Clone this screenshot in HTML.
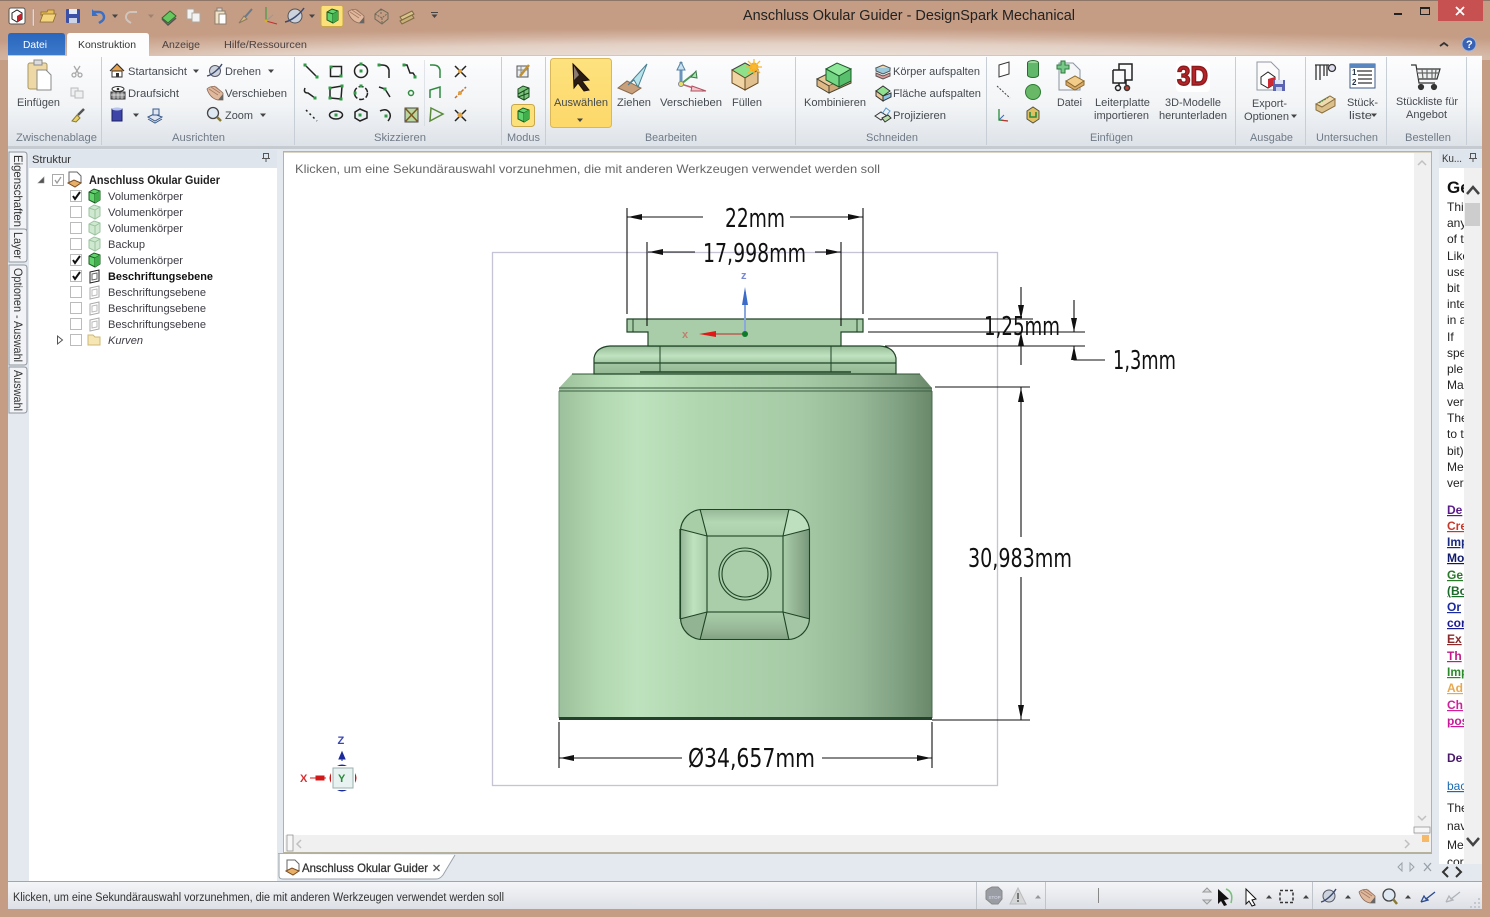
<!DOCTYPE html>
<html lang="de"><head><meta charset="utf-8"><title>Anschluss Okular Guider - DesignSpark Mechanical</title>
<style>
html,body{margin:0;padding:0;width:1490px;height:917px;overflow:hidden;background:#c59c84}
svg{display:block}
text{font-family:"Liberation Sans",Arial,sans-serif}
.r{font-size:11px;fill:#454a50}
.g{font-size:11px;fill:#6f7a86;text-anchor:start}
.t{font-size:11px;fill:#3c3c44}
.p{font-size:12px;fill:#222}
.l{font-size:12px;font-weight:bold;text-decoration:underline}
.d{font-family:"DejaVu Sans",sans-serif;font-size:26px;fill:#111}
</style></head><body>
<svg width="1490" height="917" viewBox="0 0 1490 917" xmlns="http://www.w3.org/2000/svg">
<defs>
<linearGradient id="rib" x1="0" y1="0" x2="0" y2="1"><stop offset="0" stop-color="#fdfdfe"/><stop offset=".55" stop-color="#f2f4f6"/><stop offset="1" stop-color="#dde2e8"/></linearGradient>
<radialGradient id="glow" gradientUnits="userSpaceOnUse" cx="0" cy="0" r="1" gradientTransform="translate(780 62) scale(1000 34)"><stop offset="0" stop-color="#efe8e3"/><stop offset=".55" stop-color="#e8d9cf" stop-opacity=".85"/><stop offset="1" stop-color="#e0c9ba" stop-opacity="0"/></radialGradient>
<linearGradient id="blue" x1="0" y1="0" x2="0" y2="1"><stop offset="0" stop-color="#2a66bb"/><stop offset="1" stop-color="#3b79cc"/></linearGradient>
<linearGradient id="sel" x1="0" y1="0" x2="0" y2="1"><stop offset="0" stop-color="#fde27e"/><stop offset="1" stop-color="#fdd86a"/></linearGradient>
<linearGradient id="st" x1="0" y1="0" x2="0" y2="1"><stop offset="0" stop-color="#f5f6f8"/><stop offset="1" stop-color="#dde0e6"/></linearGradient>
<linearGradient id="body" gradientUnits="userSpaceOnUse" x1="559" y1="0" x2="932" y2="0"><stop offset="0" stop-color="#9cc09b"/><stop offset=".11" stop-color="#b2d8b1"/><stop offset=".21" stop-color="#bde2bd"/><stop offset=".38" stop-color="#b0d6b0"/><stop offset=".65" stop-color="#a5caa5"/><stop offset=".81" stop-color="#95b795"/><stop offset=".92" stop-color="#7f9f81"/><stop offset="1" stop-color="#698869"/></linearGradient>
<linearGradient id="mid" x1="0" y1="0" x2="0" y2="1"><stop offset="0" stop-color="#98bb98"/><stop offset=".35" stop-color="#c0e2c0"/><stop offset=".6" stop-color="#a4c8a4"/><stop offset="1" stop-color="#93b693"/></linearGradient>
<linearGradient id="bL" x1="0" y1="0" x2="1" y2="0"><stop offset="0" stop-color="#92b392"/><stop offset=".5" stop-color="#bfe3bf"/><stop offset="1" stop-color="#a8cda8"/></linearGradient>
<linearGradient id="bR" x1="0" y1="0" x2="1" y2="0"><stop offset="0" stop-color="#a9cea9"/><stop offset=".5" stop-color="#92b292"/><stop offset="1" stop-color="#76967a"/></linearGradient>
<linearGradient id="bT" x1="0" y1="0" x2="0" y2="1"><stop offset="0" stop-color="#96b796"/><stop offset=".5" stop-color="#b4d8b4"/><stop offset="1" stop-color="#a9cea9"/></linearGradient>
<linearGradient id="bB" x1="0" y1="0" x2="0" y2="1"><stop offset="0" stop-color="#a9cea9"/><stop offset=".6" stop-color="#98b898"/><stop offset="1" stop-color="#7f9f81"/></linearGradient>
<clipPath id="rp"><rect x="1440" y="172" width="24" height="692"/></clipPath>

<g id="cubeG"><path d="M-5-4 0-7 6-5V4L1 7-5 4Z" fill="#62d26c" stroke="#155c1e"/><path d="M-5-4 1-2 6-5M1-2V7" fill="none" stroke="#155c1e"/><path d="M1-2 6-5V4L1 7Z" fill="#3fae4b"/></g>
<g id="cubeL"><path d="M-5-4 0-7 6-5V4L1 7-5 4Z" fill="#cfe9d0" stroke="#9cc3a0"/><path d="M-5-4 1-2 6-5M1-2V7" fill="none" stroke="#9cc3a0"/></g>
<g id="planeD"><path d="M-4-4 5-6V5L-4 7Z" fill="#fff" stroke="#222"/><path d="M-2-2 3-3V3L-2 4Z" fill="none" stroke="#666"/></g>
<g id="planeL"><path d="M-4-4 5-6V5L-4 7Z" fill="#fff" stroke="#aaa"/><path d="M-2-2 3-3V3L-2 4Z" fill="none" stroke="#bbb"/></g>
<g id="docI"><path d="M-6-8H2L6-4V3H-6Z" fill="#fff" stroke="#666"/><path d="M-7 3-1 0 6 3 0 7Z" fill="#e8b066" stroke="#7a4a20"/></g>
<g id="hand"><path d="M-8-4C-5-7-1-7 1-6L8 0V7H3C-2 6-6 2-8-4Z" fill="#e0b89c" stroke="#8b6a5a" stroke-width=".8"/><path d="M-6-4 3 2M-4-6 5 0M-1-7 7-1" stroke="#a67c66" stroke-width=".8"/><path d="M3 7H8V1Z" fill="#666"/></g>
<g id="tri"><path d="M-3-1.500H3L0 2Z" fill="#444"/></g>
<g id="triU"><path d="M-3 1.500H3L0-2Z" fill="#444"/></g>
<g id="dot"><rect x="-1.500" y="-1.500" width="3" height="3" fill="#2f9a45"/></g>
</defs>

<!-- window chrome -->
<rect width="1490" height="917" fill="#c59c84"/>
<rect width="1490" height="1" fill="#8d7668"/>
<rect y="0" width="1490" height="60" fill="url(#glow)"/>
<rect x="1438" y="0" width="45" height="21" fill="#c75050"/>
<path d="M1456 7l8 8m0-8-8 8" stroke="#fff" stroke-width="1.800"/>
<rect x="1394" y="13" width="8" height="2" fill="#222"/>
<rect x="1420.500" y="7.500" width="9" height="7" fill="none" stroke="#222"/><rect x="1420" y="7" width="10" height="2" fill="#222"/>
<text x="743" y="20" font-size="14.500" fill="#222" textLength="332" lengthAdjust="spacingAndGlyphs">Anschluss Okular Guider - DesignSpark Mechanical</text>

<!-- QAT -->
<g transform="translate(17 16)"><rect x="-8" y="-8" width="16" height="16" rx="2" fill="#fff" stroke="#555"/><path d="M-5-3 0-6 5-3V3L0 6-5 3Z" fill="#fff" stroke="#222"/><path d="M0 0 5-3V3L0 6Z" fill="#c8202a"/></g>
<rect x="32.500" y="9" width="1.500" height="17" fill="#f4ece6" stroke="#a89080" stroke-width=".4"/>
<g transform="translate(48 16)"><path d="M-7-4H-1L0-6H6V-1H-7Z" fill="#e9bf5a" stroke="#8a6a24" stroke-width=".8"/><path d="M-8 6-5-2H8L5 6Z" fill="#f4d57e" stroke="#8a6a24" stroke-width=".8"/></g>
<g transform="translate(73 16)"><rect x="-7" y="-7" width="14" height="14" rx="1" fill="#3d50a8"/><rect x="-4" y="-7" width="8" height="5" fill="#e6eaf4"/><rect x="-4" y="2" width="8" height="5" fill="#cdd4e8"/></g>
<path d="M93 12h6a5 5 0 0 1 3 9l-3 2" fill="none" stroke="#3a6fc4" stroke-width="2.500"/><path d="M92 9v7h6z" fill="#3a6fc4"/>
<use href="#tri" x="115" y="16"/>
<path d="M137 12h-6a5 5 0 0 0-3 9l3 2" fill="none" stroke="#cfc5bd" stroke-width="2"/><use href="#tri" x="151" y="16" opacity=".3"/>
<g transform="translate(169 17)"><path d="M-7 1 1-6 7-1-1 6Z" fill="#67c85f" stroke="#2a6a2a"/><path d="M-7 2-1 8 7 1" fill="none" stroke="#555" stroke-width="1.500"/></g>
<g transform="translate(194 15)" fill="#f2f2f2" stroke="#b0a8a0"><path d="M-7-6H0V4H-7Z"/><path d="M-2-2H6V7H-2Z"/></g>
<g transform="translate(220 16)"><rect x="-5" y="-5" width="10" height="13" fill="#f0e3c8" stroke="#8b8070"/><rect x="-1" y="-2" width="7" height="10" fill="#fff" stroke="#8b8070"/><rect x="-3" y="-8" width="5" height="3" fill="#ddd" stroke="#8b8070"/></g>
<g transform="translate(245 16)"><path d="M-6 7-1 0 2 3Z" fill="#d9b878" stroke="#8a7a60"/><path d="M0 1 7-7" stroke="#6a7a8a" stroke-width="2"/></g>
<g transform="translate(270 16)" fill="none"><path d="M-4-9V5" stroke="#2a9a3a"/><path d="M-4 5 7 8" stroke="#c03030"/><path d="M-4 5 3-1" stroke="#999"/><circle cx="-4" cy="5" r="1.500" fill="#d9b020"/></g>
<g transform="translate(295 16)"><circle r="7" fill="#cdd3dc" stroke="#555"/><path d="M-10 6C-4 5 5-2 9-8" stroke="#3a4a70" stroke-width="1.500" fill="none"/></g>
<use href="#tri" x="312" y="16"/>
<rect x="321" y="5.500" width="22" height="21" rx="2" fill="#fce07a" stroke="#c8a848"/>
<use href="#cubeG" x="332" y="16"/>
<use href="#hand" x="356" y="16"/>
<g transform="translate(381 16)" fill="none" stroke="#6d6a58"><path d="M-6-2 0-7 7-3V3L1 8-6 3Z"/><path d="M-6-2 1 2 7-3M1 2V8M0-7V-1" stroke-dasharray="2 1"/></g>
<g transform="translate(407 16)"><path d="M-7 1 5-5 7-2-5 4Z" fill="#d9c28c" stroke="#7d6a40"/><path d="M-7 5 5-1 7 2-5 8Z" fill="#c8b078" stroke="#7d6a40"/></g>
<rect x="431" y="12" width="7" height="1" fill="#444"/><use href="#tri" x="434.500" y="16"/>

<!-- tabs -->
<path d="M8 55V36q0-3 3-3H62q3 0 3 3V55Z" fill="url(#blue)"/>
<text x="23" y="48" font-size="10.500" fill="#fff" textLength="24" lengthAdjust="spacingAndGlyphs">Datei</text>
<path d="M67 56V36q0-3 3-3H146q3 0 3 3V56Z" fill="#fdfdfe"/>
<text x="78" y="48" font-size="10.500" fill="#333" textLength="58" lengthAdjust="spacingAndGlyphs">Konstruktion</text>
<text x="162" y="48" font-size="10.500" fill="#4a4040" textLength="38" lengthAdjust="spacingAndGlyphs">Anzeige</text>
<text x="224" y="48" font-size="10.500" fill="#4a4040" textLength="83" lengthAdjust="spacingAndGlyphs">Hilfe/Ressourcen</text>
<path d="M1440 46l4-3 4 3" fill="none" stroke="#333" stroke-width="1.800"/>
<circle cx="1469" cy="44" r="7" fill="#3a62b4" stroke="#9fb4dc"/><text x="1466" y="48" font-size="11" font-weight="bold" fill="#fff">?</text>

<!-- ribbon -->
<rect x="8" y="55" width="1474" height="92" fill="url(#rib)"/>
<rect x="8" y="55" width="59" height="1" fill="#cfc8c2"/><rect x="149" y="55" width="1333" height="1" fill="#cfc8c2"/>
<rect x="8" y="146" width="1474" height="3" fill="#c6cbd2"/>
<g fill="#c8ced6"><rect x="101" y="57" width="1" height="88"/><rect x="294" y="57" width="1" height="88"/><rect x="501" y="57" width="1" height="88"/><rect x="545" y="57" width="1" height="88"/><rect x="795" y="57" width="1" height="88"/><rect x="986" y="57" width="1" height="88"/><rect x="1235" y="57" width="1" height="88"/><rect x="1305" y="57" width="1" height="88"/><rect x="1386" y="57" width="1" height="88"/><rect x="1466" y="57" width="1" height="88"/><rect x="424" y="60" width="1" height="66" opacity=".5"/></g>

<!-- Zwischenablage -->
<g transform="translate(39 76)"><rect x="-11" y="-13" width="19" height="26" rx="2" fill="#eed9a6" stroke="#a99660"/><rect x="-5" y="-16" width="8" height="5" fill="#ddd" stroke="#8a8a8a"/><path d="M-2-6H7L12-1V14H-2Z" fill="#fff" stroke="#8a8a8a"/></g>
<text x="17" y="106" class="r" textLength="43" lengthAdjust="spacingAndGlyphs">Einfügen</text>
<g transform="translate(77 71)" fill="none" stroke="#a8a8a8" stroke-width="1.300"><path d="M-3-5 2 3M3-5-2 3"/><circle cx="-3" cy="4" r="2"/><circle cx="3" cy="4" r="2"/></g>
<g transform="translate(77 93)" fill="#eef0f2" stroke="#bbb"><path d="M-6-5H1V3H-6Z"/><path d="M-2-2H6V5H-2Z"/></g>
<g transform="translate(78 115)"><path d="M-6 6-1 0 2 3-2 7Z" fill="#e9d36a" stroke="#8a7a30"/><path d="M0 0 6-6" stroke="#555" stroke-width="2.500"/></g>

<!-- Ausrichten -->
<g transform="translate(117 71)"><path d="M-7 0 0-7 7 0" fill="#e9a24a" stroke="#333" stroke-width="1.200"/><rect x="-5" y="0" width="10" height="6" fill="#fff" stroke="#333"/><rect x="-1" y="2" width="3" height="4" fill="#333"/></g>
<text x="128" y="75" class="r" textLength="59" lengthAdjust="spacingAndGlyphs">Startansicht</text><use href="#tri" x="196" y="71"/>
<g transform="translate(215 71)"><circle r="5.500" fill="#cdd3dc" stroke="#556"/><path d="M-8 5C-3 4 4-2 7-7" stroke="#3a4a70" stroke-width="1.400" fill="none"/></g>
<text x="225" y="75" class="r" textLength="36" lengthAdjust="spacingAndGlyphs">Drehen</text><use href="#tri" x="271" y="71"/>
<g transform="translate(118 93)"><rect x="-7" y="-1" width="14" height="7" fill="#888" stroke="#333"/><path d="M-4-1V6M0-1V6M4-1V6M-7 2H7" stroke="#eee" stroke-width=".7"/><ellipse cy="-4" rx="6" ry="2.500" fill="#fff" stroke="#333"/><circle cy="-4" r="1.300" fill="#333"/></g>
<text x="128" y="97" class="r" textLength="51" lengthAdjust="spacingAndGlyphs">Draufsicht</text>
<use href="#hand" x="215" y="93"/>
<text x="225" y="97" class="r" textLength="62" lengthAdjust="spacingAndGlyphs">Verschieben</text>
<g transform="translate(117 115)"><path d="M-5-6H5V6H-5Z" fill="#3d46a8" stroke="#1a1f60"/><ellipse cy="-6" rx="5" ry="1.500" fill="#b8c4ec"/></g><use href="#tri" x="136" y="115"/>
<g transform="translate(155 115)" fill="#dfe6f2" stroke="#3a5a8a"><path d="M-7 2-1-1 7 2 0 6Z"/><path d="M-7 4 0 8 7 4" fill="none"/><path d="M-2-6H4V0H-2Z"/></g>
<g transform="translate(214 114)"><circle cx="-1" cy="-1" r="5.500" fill="#dfe9f4" stroke="#444" stroke-width="1.300"/><path d="M3 3 7 7" stroke="#8a7a30" stroke-width="2.500"/></g>
<text x="225" y="119" class="r" textLength="28" lengthAdjust="spacingAndGlyphs">Zoom</text><use href="#tri" x="263" y="115"/>

<!-- Skizzieren -->
<g fill="none" stroke="#222" stroke-width="1.500">
<path d="M305 65 317 77"/><rect x="330.500" y="66.500" width="11" height="10"/><circle cx="361" cy="71" r="6.500"/><path d="M379 65h3q6 0 7 5v8"/><path d="M404 65h3l3 8h3l2 3"/><path d="M430 65h3q6 0 7 5v8" stroke="#2f8a3f"/><path d="M455 66 466 77M466 66 455 77"/>
<path d="M305 88q-2 5 3 5l7 5"/><path d="M330 88 342 86 341 99 330 98Z"/><circle cx="361" cy="93" r="6.500" stroke-dasharray="5 2"/><path d="M379 87l6 2 5 8"/><path d="M430 98v-8l10-3v11" stroke="#2f8a3f"/><path d="M455 98 466 87" stroke="#c07030" stroke-dasharray="3 1.500"/>
<path d="M306 110 317 121" stroke-dasharray="2 3"/><ellipse cx="336" cy="115" rx="6.500" ry="4"/><path d="M355 112 360 109 367 112 367 118 360 121 355 118Z"/><path d="M380 111q6-3 9 1t-1 9"/><path d="M430 121 443 114 431 108Z" stroke="#5a8a3a"/><path d="M455 110 466 121M466 110 455 121"/>
</g>
<rect x="405" y="108" width="13" height="14" fill="#b9d6a0" stroke="#444"/><path d="M405 122 418 108M405 108l13 14" stroke="#7a5a20" stroke-width="1.500"/>
<circle cx="411" cy="93" r="2.500" fill="none" stroke="#2f8a3f" stroke-width="1.500"/>
<use href="#dot" x="305" y="65"/><use href="#dot" x="317" y="77"/><use href="#dot" x="331" y="67"/><use href="#dot" x="341" y="76"/><use href="#dot" x="361" y="64"/><use href="#dot" x="361" y="71"/><use href="#dot" x="379" y="65"/><use href="#dot" x="404" y="65"/><use href="#dot" x="415" y="77"/><use href="#dot" x="315" y="98"/><use href="#dot" x="330" y="88"/><use href="#dot" x="342" y="86"/><use href="#dot" x="341" y="99"/><use href="#dot" x="330" y="98"/><use href="#dot" x="361" y="86"/><use href="#dot" x="355" y="93"/><use href="#dot" x="385" y="89"/><use href="#dot" x="336" y="115"/><use href="#dot" x="360" y="115"/><use href="#dot" x="386" y="116"/>
<circle cx="460" cy="71" r="2" fill="#e0a040"/><circle cx="460" cy="93" r="2" fill="#e0a040"/><circle cx="460" cy="115" r="2.500" fill="#e0a040"/>

<!-- Modus -->
<g transform="translate(523 71)"><rect x="-6" y="-5" width="11" height="11" fill="#e8eef2" stroke="#555"/><path d="M-6-1H5M-2-5V6" stroke="#888"/><path d="M-3 5 6-6" stroke="#c09030" stroke-width="2.500"/></g>
<g transform="translate(523 93)"><path d="M-5-4 0-7 6-5V4L1 7-5 4Z" fill="#7cc47c" stroke="#1a4a1f"/><path d="M-5 1 6-5M-5 4 6 0M1-2V7" stroke="#1a4a1f" fill="none"/></g>
<rect x="511.500" y="104.500" width="23" height="22" rx="3" fill="#fce07a" stroke="#c8a848"/><use href="#cubeG" x="523" y="115"/>
<text x="507" y="141" class="g" textLength="33" lengthAdjust="spacingAndGlyphs">Modus</text>

<!-- Bearbeiten -->
<rect x="550.500" y="58.500" width="61" height="69" rx="3" fill="url(#sel)" stroke="#d8b85a"/>
<path d="M573 64 589 80 582 81 589 90 584 91 578 83 574 88Z" fill="#2a1c12" stroke="#1a100a"/><path d="M574 66 574 80 579 75Z" fill="#8a7a70"/>
<text x="554" y="106" class="r" fill="#4c3c1c" textLength="54" lengthAdjust="spacingAndGlyphs">Auswählen</text><use href="#tri" x="580" y="120"/>
<g transform="translate(633 79)"><path d="M-15 9-6 2 8 9-1 15Z" fill="#c9a07c" stroke="#8a6a4c"/><path d="M-5 6 14-15 5 8 1 1Z" fill="#b7e4ec" stroke="#4a7f90"/></g>
<text x="617" y="106" class="r" textLength="34" lengthAdjust="spacingAndGlyphs">Ziehen</text>
<g transform="translate(688 80)" fill="none"><path d="M-7 4V-18" stroke="#6a94bc" stroke-width="3"/><path d="M-11-10-7-18-3-10Z" fill="#c8e4f4" stroke="#5a80a0"/><path d="M-7 4 7-7" stroke="#4a9a5a" stroke-width="2"/><path d="M3-3 8-9 9-2Z" fill="#a8e4b0" stroke="#3a7a4a"/><path d="M-7 4 15 11" stroke="#c06070" stroke-width="1.500"/><path d="M4 6 18 11 3 11Z" fill="#f4c4c8" stroke="#b05060"/><circle cx="-7" cy="4" r="2.500" fill="#e8e060" stroke="#888"/></g>
<text x="660" y="106" class="r" textLength="62" lengthAdjust="spacingAndGlyphs">Verschieben</text>
<g transform="translate(746 76)"><path d="M-14-6-1-13 12-6-1 2Z" fill="#8fe08a" stroke="#444"/><path d="M-14-6V7L-1 14V2Z" fill="#f0d4a4" stroke="#6a4a24"/><path d="M12-6V7L-1 14V2Z" fill="#dfc08e" stroke="#6a4a24"/><circle cx="8" cy="-9" r="4.500" fill="#f8a820"/><path d="M8-17V-1M0-9H16M2-15 14-3M14-15 2-3" stroke="#f8b830" stroke-width="1.300"/></g>
<text x="732" y="106" class="r" textLength="30" lengthAdjust="spacingAndGlyphs">Füllen</text>

<!-- Schneiden -->
<g transform="translate(835 78)"><path d="M-18 1-6-5 8 1-6 8Z" fill="#e9c89a" stroke="#443"/><path d="M-18 1V8L-6 15V8Z" fill="#e0b884" stroke="#443"/><path d="M-6 8V15L16 5V-2" fill="#cfa878" stroke="#443"/><path d="M-9-9 2-15 16-9 4-2Z" fill="#8fe89a" stroke="#1d5a28"/><path d="M-9-9V2L4 9V-2Z" fill="#72d684" stroke="#1d5a28"/><path d="M4-2V9L16 3V-9Z" fill="#58bf6c" stroke="#1d5a28"/></g>
<text x="804" y="106" class="r" textLength="62" lengthAdjust="spacingAndGlyphs">Kombinieren</text>
<g transform="translate(883 71)"><path d="M-7-3 0-6 7-3 0 0Z" fill="#f0d4a4" stroke="#555"/><path d="M-7-3V0L0 3 7 0V-3" fill="#9cc8dc" stroke="#555"/><path d="M-7 2V5L0 8 7 5V2 L0 5Z" fill="#e09898" stroke="#555"/></g>
<text x="893" y="75" class="r" textLength="87" lengthAdjust="spacingAndGlyphs">Körper aufspalten</text>
<g transform="translate(883 93)"><path d="M-7-2 0-7 7-2 0 3Z" fill="#90e090" stroke="#333"/><path d="M-7-2V3L0 8V3Z" fill="#e9c89a" stroke="#333"/><path d="M0 3V8L8 4V0Z" fill="#8ac4e0" stroke="#333"/></g>
<text x="893" y="97" class="r" textLength="88" lengthAdjust="spacingAndGlyphs">Fläche aufspalten</text>
<g transform="translate(883 115)" fill="none" stroke="#333"><path d="M-8 1-2-3 4 1-2 5Z" fill="#f0f0f0"/><path d="M-1-1 3-7 7-4 3 1" stroke="#5a9ad0"/><path d="M-1 3 5 0 8 3 2 7Z" fill="#b8e0a8"/></g>
<text x="893" y="119" class="r" textLength="53" lengthAdjust="spacingAndGlyphs">Projizieren</text>

<!-- Einfügen -->
<path d="M999 65 1009 62V74L999 77Z" fill="#fff" stroke="#333"/>
<path d="M997 86 1010 98" stroke="#444" stroke-dasharray="2 1.500"/>
<path d="M999 109V120L1008 121" fill="none" stroke="#2a8a3a" stroke-width="1.300"/><path d="M999 120 1004 115" stroke="#3a6ab0"/><path d="M1001 120 1008 121" stroke="#c03030"/>
<g transform="translate(1033 69)"><ellipse cy="-6" rx="5.500" ry="2.500" fill="#9ad89a" stroke="#2a6a30"/><path d="M-5.500-6V6A5.500 2.500 0 0 0 5.500 6V-6" fill="#62b86a" stroke="#2a6a30"/></g>
<circle cx="1033" cy="92" r="7.500" fill="#68b868" stroke="#2a7a30"/>
<path d="M1027 111 1033 107 1039 111V119L1033 123 1027 119Z" fill="#e0c060" stroke="#554"/><path d="M1030 112V117H1036V112" fill="none" stroke="#2a8a3a" stroke-width="1.600"/>
<g transform="translate(1069 76)"><path d="M-10-13H4L11-6V14H-10Z" fill="#f4f6f8" stroke="#8a94a0"/><path d="M-12-11H-8V-15H-4V-11H0V-7H-4V-3H-8V-7H-12Z" fill="#78c88a" stroke="#2a7a3a"/><path d="M-3 5 6 0 15 5 6 11Z" fill="#f2cc88" stroke="#8a6a30"/><path d="M-3 5V9L6 14 15 9V5L6 11Z" fill="#dcaa68" stroke="#8a6a30"/></g>
<text x="1057" y="106" class="r" textLength="25" lengthAdjust="spacingAndGlyphs">Datei</text>
<g transform="translate(1122 76)" fill="none" stroke="#222" stroke-width="1.500"><path d="M-9-6H-3V-12H10V4H4V9M-9-6V7H3V-6H-9M-3 7V10"/><circle cx="-4" cy="12" r="2.500"/><circle cx="5" cy="12" r="2.500" fill="#c84030" stroke="#333"/></g>
<text x="1095" y="106" class="r" textLength="55" lengthAdjust="spacingAndGlyphs">Leiterplatte</text>
<text x="1094" y="119" class="r" textLength="55" lengthAdjust="spacingAndGlyphs">importieren</text>
<rect x="1176" y="61" width="34" height="31" rx="4" fill="#fff"/>
<text x="1177" y="85" font-size="27" font-weight="bold" fill="#b52428" stroke="#8a1a1c" stroke-width="1.400" textLength="31" lengthAdjust="spacingAndGlyphs">3D</text>
<text x="1165" y="106" class="r" textLength="56" lengthAdjust="spacingAndGlyphs">3D-Modelle</text>
<text x="1159" y="119" class="r" textLength="68" lengthAdjust="spacingAndGlyphs">herunterladen</text>

<!-- Ausgabe -->
<g transform="translate(1270 78)"><path d="M-13-16H1L9-8V12H-13Z" fill="#fbfbfc" stroke="#9098a4"/><path d="M-9-1-2-6 5-1V6L-2 10-9 6Z" fill="#fff" stroke="#222"/><path d="M-2 1 5-1V6L-2 10Z" fill="#d02830"/><rect x="3" y="2" width="12" height="11" fill="#5a64b0"/><rect x="5" y="2" width="8" height="4" fill="#e0e6f4"/><rect x="6" y="9" width="6" height="4" fill="#c8d0e8"/></g>
<text x="1252" y="107" class="r" textLength="35" lengthAdjust="spacingAndGlyphs">Export-</text>
<text x="1244" y="120" class="r" textLength="45" lengthAdjust="spacingAndGlyphs">Optionen</text><use href="#tri" x="1294" y="116"/>

<!-- Untersuchen -->
<g transform="translate(1325 73)" fill="none" stroke="#333" stroke-width="1.300"><path d="M-10-8H4M-9-8V7M-5-8V7M-1-8V3M2-8V3"/><circle cx="7" cy="-5" r="3.500" fill="#dde"/></g>
<g transform="translate(1325 104)"><path d="M-9 0 5-8 10-5-3 3Z" fill="#f0dab0" stroke="#8a7040"/><path d="M-9 0V6L-3 9 10 2V-5L-3 3Z" fill="#dcc08c" stroke="#8a7040"/><path d="M-6-1 4-7" stroke="#3a8a3a" stroke-dasharray="2 1"/></g>
<g transform="translate(1362 76)"><rect x="-12" y="-12" width="25" height="24" fill="#fff" stroke="#3a5a88"/><rect x="-12" y="-12" width="25" height="4" fill="#5a86c0"/><text x="-10" y="-1" font-size="8" font-weight="bold" fill="#234">1</text><text x="-10" y="9" font-size="8" font-weight="bold" fill="#234">2</text><path d="M-5-5H10M-4-1H10M-4 3H10M-4 7H10" stroke="#333" stroke-width="1.300"/></g>
<text x="1347" y="106" class="r" textLength="31" lengthAdjust="spacingAndGlyphs">Stück-</text>
<text x="1349" y="119" class="r" textLength="23" lengthAdjust="spacingAndGlyphs">liste</text><use href="#tri" x="1374" y="115"/>

<!-- Bestellen -->
<g transform="translate(1426 76)" fill="none" stroke="#333" stroke-width="1.200"><path d="M-15-11H-10L-7 7H9"/><path d="M-9-7H14L11 3H-7" fill="#eef0f2"/><path d="M-4-7-3 3M1-7V3M6-7V3M10-7 9 3M-8-3H13" stroke="#666"/><circle cx="-5" cy="11" r="2.500" fill="#333"/><circle cx="8" cy="11" r="2.500" fill="#333"/></g>
<text x="1396" y="105" class="r" textLength="62" lengthAdjust="spacingAndGlyphs">Stückliste für</text>
<text x="1406" y="118" class="r" textLength="41" lengthAdjust="spacingAndGlyphs">Angebot</text>

<!-- group labels -->
<text x="16" y="141" class="g" textLength="81" lengthAdjust="spacingAndGlyphs">Zwischenablage</text>
<text x="172" y="141" class="g" textLength="53" lengthAdjust="spacingAndGlyphs">Ausrichten</text>
<text x="374" y="141" class="g" textLength="52" lengthAdjust="spacingAndGlyphs">Skizzieren</text>
<text x="645" y="141" class="g" textLength="52" lengthAdjust="spacingAndGlyphs">Bearbeiten</text>
<text x="866" y="141" class="g" textLength="52" lengthAdjust="spacingAndGlyphs">Schneiden</text>
<text x="1090" y="141" class="g" textLength="43" lengthAdjust="spacingAndGlyphs">Einfügen</text>
<text x="1250" y="141" class="g" textLength="43" lengthAdjust="spacingAndGlyphs">Ausgabe</text>
<text x="1316" y="141" class="g" textLength="62" lengthAdjust="spacingAndGlyphs">Untersuchen</text>
<text x="1405" y="141" class="g" textLength="46" lengthAdjust="spacingAndGlyphs">Bestellen</text>

<!-- main background -->
<rect x="8" y="149" width="1474" height="732" fill="#e4e9ef"/>

<!-- left tabs -->
<g fill="#f1f3f6" stroke="#8e969e">
<path d="M9 152H24Q27 152 27 155V229Q27 232 24 232H9Z"/>
<path d="M9 229H24Q27 229 27 232V259Q27 262 24 262H9Z"/>
<path d="M9 265H24Q27 265 27 268V362Q27 365 24 365H9Z"/>
<path d="M9 367H24Q27 367 27 370V410Q27 413 24 413H9Z"/>
</g>
<g font-size="12" fill="#333">
<text transform="translate(14 155) rotate(90)" textLength="72" lengthAdjust="spacingAndGlyphs">Eigenschaften</text>
<text transform="translate(14 232) rotate(90)" textLength="27" lengthAdjust="spacingAndGlyphs">Layer</text>
<text transform="translate(14 268) rotate(90)" textLength="94" lengthAdjust="spacingAndGlyphs">Optionen - Auswahl</text>
<text transform="translate(14 370) rotate(90)" textLength="41" lengthAdjust="spacingAndGlyphs">Auswahl</text>
</g>

<!-- structure panel -->
<rect x="29" y="150" width="248" height="18" fill="#dfe5ec"/>
<rect x="29" y="168" width="248" height="713" fill="#fff"/>
<text x="32" y="163" font-size="11" fill="#333" textLength="39" lengthAdjust="spacingAndGlyphs">Struktur</text>
<g transform="translate(266 158)" fill="none" stroke="#555"><rect x="-2.500" y="-4.500" width="5" height="5"/><path d="M-4 .500H4M0 .500V4"/></g>
<path d="M38 183 44 177V183Z" fill="#555" stroke="#888" stroke-width=".6"/>
<rect x="52.500" y="174.500" width="11" height="11" fill="#fff" stroke="#aaa"/><path d="M55 180 57 183 61 177" fill="none" stroke="#999" stroke-width="1.300"/>
<use href="#docI" x="75" y="180"/>
<text x="89" y="184" font-size="11.500" font-weight="bold" fill="#222" textLength="131" lengthAdjust="spacingAndGlyphs">Anschluss Okular Guider</text>
<g fill="#fff" stroke="#bbb"><rect x="70.500" y="190.500" width="11" height="11"/><rect x="70.500" y="206.500" width="11" height="11"/><rect x="70.500" y="222.500" width="11" height="11"/><rect x="70.500" y="238.500" width="11" height="11"/><rect x="70.500" y="254.500" width="11" height="11"/><rect x="70.500" y="270.500" width="11" height="11"/><rect x="70.500" y="286.500" width="11" height="11"/><rect x="70.500" y="302.500" width="11" height="11"/><rect x="70.500" y="318.500" width="11" height="11"/><rect x="70.500" y="334.500" width="11" height="11"/></g>
<g fill="none" stroke="#111" stroke-width="2"><path d="M73 196 75 199 80 192"/><path d="M73 260 75 263 80 256"/><path d="M73 276 75 279 80 272"/></g>
<use href="#cubeG" x="94" y="196"/><use href="#cubeL" x="94" y="212"/><use href="#cubeL" x="94" y="228"/><use href="#cubeL" x="94" y="244"/><use href="#cubeG" x="94" y="260"/>
<use href="#planeD" x="94" y="276"/><use href="#planeL" x="94" y="292"/><use href="#planeL" x="94" y="308"/><use href="#planeL" x="94" y="324"/>
<path d="M57.500 336V344L62.500 340Z" fill="#fff" stroke="#555"/>
<path d="M88 335H93L95 337H100V345H88Z" fill="#f6e6b4" stroke="#cdb878"/>
<text x="108" y="200" class="t" textLength="75" lengthAdjust="spacingAndGlyphs">Volumenkörper</text>
<text x="108" y="216" class="t" textLength="75" lengthAdjust="spacingAndGlyphs">Volumenkörper</text>
<text x="108" y="232" class="t" textLength="75" lengthAdjust="spacingAndGlyphs">Volumenkörper</text>
<text x="108" y="248" class="t" textLength="37" lengthAdjust="spacingAndGlyphs">Backup</text>
<text x="108" y="264" class="t" textLength="75" lengthAdjust="spacingAndGlyphs">Volumenkörper</text>
<text x="108" y="280" font-size="11" font-weight="bold" fill="#111" textLength="105" lengthAdjust="spacingAndGlyphs">Beschriftungsebene</text>
<text x="108" y="296" class="t" textLength="98" lengthAdjust="spacingAndGlyphs">Beschriftungsebene</text>
<text x="108" y="312" class="t" textLength="98" lengthAdjust="spacingAndGlyphs">Beschriftungsebene</text>
<text x="108" y="328" class="t" textLength="98" lengthAdjust="spacingAndGlyphs">Beschriftungsebene</text>
<text x="108" y="344" class="t" font-style="italic" textLength="35" lengthAdjust="spacingAndGlyphs">Kurven</text>

<!-- viewport -->
<rect x="283.500" y="151.500" width="1148" height="701" fill="#fff" stroke="#b6b29e"/>
<rect x="284" y="152" width="1147" height="1" fill="#d9d6c6"/>
<rect x="1414" y="153" width="17" height="682" fill="#f0f0f0"/>
<rect x="285" y="835" width="1146" height="17" fill="#f0f0f0"/>
<path d="M1418 165l4-4 4 4" fill="none" stroke="#c0c0c0" stroke-width="1.500"/>
<path d="M1418 816l4 4 4-4" fill="none" stroke="#c0c0c0" stroke-width="1.500"/>
<path d="M301 840l-4 4 4 4M1405 840l4 4-4 4" fill="none" stroke="#c0c0c0" stroke-width="1.500"/>
<rect x="1414" y="827" width="16" height="6" fill="#f7f7f7" stroke="#888" stroke-width=".7"/>
<rect x="287" y="835" width="6" height="16" fill="#f7f7f7" stroke="#888" stroke-width=".7"/>
<rect x="1422" y="835" width="7" height="7" fill="#f5b968"/>
<text x="295" y="173" font-size="12" fill="#666" textLength="585" lengthAdjust="spacingAndGlyphs">Klicken, um eine Sekundärauswahl vorzunehmen, die mit anderen Werkzeugen verwendet werden soll</text>

<!-- annotation plane -->
<rect x="492.500" y="252.500" width="505" height="533" fill="none" stroke="#c4c4d4" stroke-width="1.300"/>

<!-- model -->
<rect x="559" y="388" width="373" height="331" fill="url(#body)"/>
<path d="M572 374H920L932 388V391H559V388Z" fill="url(#body)"/>
<path d="M559 388H932M559 391H932" stroke="#3d5f42" stroke-width="1"/>
<path d="M572 374H920" fill="none" stroke="#2f5535"/>
<path d="M932 391V718" stroke="#48684c"/>
<path d="M559 391V718" stroke="#6f9474"/>
<rect x="559" y="717" width="373" height="3" fill="#23422a"/>
<path d="M594 374V358Q596 347 610 346H880Q894 347 896 358V374Z" fill="url(#mid)" stroke="#1f4526" stroke-width="1.200"/>
<path d="M594 363H896" stroke="#1f4526" stroke-width="1.300"/>
<path d="M660 346V372M831 346V372" stroke="#1f4526"/>
<path d="M640 372H851" stroke="#1f4526" stroke-width="1.500"/>
<path d="M627 319H863V332H841V346H648V332H627Z" fill="#a8cda8" stroke="#1f4526" stroke-width="1.200"/>
<path d="M633 319V332M857 319V332" stroke="#1f4526"/>

<!-- boss -->
<rect x="680" y="509" width="130" height="131" rx="22" fill="#a6cca6"/>
<path d="M701 509H789L783 536H707Z" fill="url(#bT)"/>
<path d="M701 640H789L783 612H707Z" fill="url(#bB)"/>
<path d="M680 529 707 536V612L680 619Z" fill="url(#bL)"/>
<path d="M810 529 783 536V612L810 619Z" fill="url(#bR)"/>
<path d="M680 529 A22 22 0 0 1 701 509L707 536Z" fill="#a8cea8"/>
<path d="M810 529 A22 22 0 0 0 789 509L783 536Z" fill="#bfe0bf"/>
<path d="M680 619 A22 22 0 0 0 701 640L707 612Z" fill="#92b492"/>
<path d="M810 619 A22 22 0 0 1 789 640L783 612Z" fill="#a4c6a4"/>
<rect x="707" y="536" width="76" height="76" fill="#a9cea9"/>
<g fill="none" stroke="#1f4526" stroke-width="1.100"><rect x="680.500" y="509.500" width="129" height="130" rx="22"/><rect x="707" y="536" width="76" height="76"/><path d="M700 509 707 536M680 529 707 536M789 509 783 536M810 529 783 536M680 619 707 612M700 640 707 612M789 640 783 612M810 619 783 612"/><circle cx="745" cy="574" r="26"/><circle cx="745" cy="574" r="23"/><path d="M680 529V619" stroke-width="1.200"/></g>

<!-- dims -->
<g stroke="#111" stroke-width="1.100" fill="none">
<path d="M627 208V314M863 208V314M647 242V326M841 242V326"/>
<path d="M627 217H703M790 217H863M648 252H695M815 252H841"/>
<path d="M868 319H1033M868 332H1085M885 346H1085"/>
<path d="M1021 287V319M1021 332V365M1074 300V332M1074 346V360H1105"/>
<path d="M935 387H1030M932 720H1030M1021 387V537M1021 577V720"/>
<path d="M559 722V768M932 722V768M559 758H682M822 758H932"/>
</g>
<g fill="#111">
<path d="M628 217 642 214V220ZM862 217 848 214V220ZM649 252 663 249V255ZM840 252 826 249V255Z"/>
<path d="M1021 319 1018 305H1024ZM1021 332 1018 346H1024ZM1074 332 1071 318H1077ZM1074 346 1071 360H1077Z"/>
<path d="M1021 388 1018 402H1024ZM1021 719 1018 705H1024ZM560 758 574 755V761ZM931 758 917 755V761Z"/>
</g>
<text class="d" x="725" y="227" textLength="60" lengthAdjust="spacingAndGlyphs">22mm</text>
<text class="d" x="703" y="262" textLength="103" lengthAdjust="spacingAndGlyphs">17,998mm</text>
<text class="d" x="984" y="335" textLength="76" lengthAdjust="spacingAndGlyphs">1,25mm</text>
<text class="d" x="1113" y="369" textLength="63" lengthAdjust="spacingAndGlyphs">1,3mm</text>
<text class="d" x="968" y="567" textLength="104" lengthAdjust="spacingAndGlyphs">30,983mm</text>
<text class="d" x="688" y="767" textLength="127" lengthAdjust="spacingAndGlyphs">Ø34,657mm</text>

<!-- triad -->
<path d="M745 334V292" stroke="#8aa8dc" stroke-width="2"/><path d="M745 287 742 305H748Z" fill="#3a6cc8"/>
<text x="741" y="279" font-size="11" font-weight="bold" fill="#7a88d4">z</text>
<path d="M745 334H712" stroke="#b87a68" stroke-width="2"/><path d="M699 334 716 331V337Z" fill="#e01818"/>
<text x="682" y="338" font-size="11" font-weight="bold" fill="#c08070">x</text>
<circle cx="745" cy="334" r="3" fill="#0f7a2a"/>

<!-- view cube -->
<rect x="333" y="768" width="20" height="20" fill="#e8f2f0" stroke="#9ab0b0"/>
<text x="338" y="782" font-size="11" font-weight="bold" fill="#2a8a3a">Y</text>
<path d="M342 753V761M339 759 342 752 345 759Z" fill="#1a2a9a" stroke="#1a2a9a"/>
<text x="337.500" y="744" font-size="11" font-weight="bold" fill="#3a44b4">Z</text>
<path d="M337 766Q342 763 347 766ZM337 790Q342 793 347 790Z" fill="#1a2a9a"/>
<path d="M331 773Q328 778 331 783ZM355 773Q358 778 355 783Z" fill="#c81818"/>
<path d="M310 778H326M316 776H324V780H316Z" stroke="#d01818" fill="#d01818"/>
<text x="300" y="782" font-size="11" font-weight="bold" fill="#d83030">X</text>

<!-- doc tab -->
<rect x="278" y="853" width="1154" height="1" fill="#aab0b6"/>
<path d="M279 854V876Q279 879 283 879H436Q440 879 443 875L455 855" fill="#fff" stroke="#9aa2aa"/>
<use href="#docI" x="293" y="868"/>
<text x="302" y="872" font-size="12" fill="#333" stroke="#333" stroke-width=".3" textLength="126" lengthAdjust="spacingAndGlyphs">Anschluss Okular Guider</text>
<path d="M433.500 865l6 6m0-6-6 6" stroke="#555" stroke-width="1.300"/>
<path d="M1402 863l-4 4 4 4ZM1410 863l4 4-4 4Z" fill="none" stroke="#9aa2aa"/>
<path d="M1424 863l7 8m0-8-7 8" stroke="#98a0a8" stroke-width="1.300"/>

<!-- right panel -->
<rect x="1439" y="150" width="43" height="18" fill="#dfe5ec"/>
<rect x="1439" y="168" width="43" height="696" fill="#fff"/>
<rect x="1464" y="168" width="18" height="696" fill="#f0f0f0"/>
<rect x="1465" y="203" width="15" height="23" fill="#cdcdcd"/>
<text x="1442" y="162" font-size="11" fill="#333" textLength="20" lengthAdjust="spacingAndGlyphs">Ku...</text>
<g transform="translate(1473 158)" fill="none" stroke="#555"><rect x="-2.500" y="-4.500" width="5" height="5"/><path d="M-4 .500H4M0 .500V4"/></g>
<g clip-path="url(#rp)">
<text x="1447" y="193" font-size="17" font-weight="bold" fill="#111">Ge</text>
<text class="p" x="1447" y="211">This</text><text class="p" x="1447" y="227">any</text><text class="p" x="1447" y="243">of th</text><text class="p" x="1447" y="260">Like</text><text class="p" x="1447" y="276">use</text><text class="p" x="1447" y="292">bit</text><text class="p" x="1447" y="308">inte</text><text class="p" x="1447" y="324">in a</text><text class="p" x="1447" y="341">If</text><text class="p" x="1447" y="357">spe</text><text class="p" x="1447" y="373">ple</text><text class="p" x="1447" y="389">Ma</text><text class="p" x="1447" y="406">ver</text><text class="p" x="1447" y="422">The</text><text class="p" x="1447" y="438">to t</text><text class="p" x="1447" y="455">bit)</text><text class="p" x="1447" y="471">Me</text><text class="p" x="1447" y="487">ver</text>
<text class="l" x="1447" y="514" fill="#5a1a8a">De</text>
<text class="l" x="1447" y="530" fill="#c8382a">Cre</text>
<text class="l" x="1447" y="546" fill="#1a2a80">Imp</text>
<text class="l" x="1447" y="562" fill="#101a6a">Mo</text>
<text class="l" x="1447" y="579" fill="#2a7a2a">Ge</text>
<text class="l" x="1447" y="595" fill="#1a6a2a">(Bo</text>
<text class="l" x="1447" y="611" fill="#1a2aa0">Or</text>
<text class="l" x="1447" y="627" fill="#1a1a90">cor</text>
<text class="l" x="1447" y="643" fill="#8a2a2a">Ex</text>
<text class="l" x="1447" y="660" fill="#c01a8a">Th</text>
<text class="l" x="1447" y="676" fill="#2a8a2a">Imp</text>
<text class="l" x="1447" y="692" fill="#e8a850">Ad</text>
<text class="l" x="1447" y="709" fill="#d0209a">Ch</text>
<text class="l" x="1447" y="725" fill="#c8189a">pos</text>
<text x="1447" y="762" font-size="12" font-weight="bold" fill="#4a1a6a">De</text>
<text x="1447" y="790" font-size="12" fill="#1a6ab0" text-decoration="underline">bac</text>
<text class="p" x="1447" y="812">The</text><text class="p" x="1447" y="830">nav</text><text class="p" x="1447" y="849">Me</text><text class="p" x="1447" y="866">cor</text>
</g>
<path d="M1467 194l6-7 6 7" fill="none" stroke="#444" stroke-width="2.500"/>
<path d="M1467 838l6 7 6-7" fill="none" stroke="#444" stroke-width="2.500"/>
<rect x="1439" y="864" width="43" height="17" fill="#e4e9ef"/>
<path d="M1448 867l-5 5 5 5M1456 867l5 5-5 5" fill="none" stroke="#333" stroke-width="2"/>

<!-- status bar -->
<rect x="8" y="881" width="1474" height="28" fill="url(#st)"/>
<rect x="8" y="881" width="1474" height="1" fill="#a0a6ac"/>
<text x="13" y="901" font-size="11.500" fill="#333" textLength="491" lengthAdjust="spacingAndGlyphs">Klicken, um eine Sekundärauswahl vorzunehmen, die mit anderen Werkzeugen verwendet werden soll</text>
<g fill="#c0c5cb"><rect x="976" y="882" width="1" height="27"/><rect x="1045" y="882" width="1" height="27"/><rect x="1312" y="882" width="1" height="27"/></g>
<rect x="1098" y="888" width="1" height="15" fill="#888"/>
<path d="M988 889 992 887H998L1002 891V899L998 904H992L986 899V891Z" fill="#9a9ea4" stroke="#888"/>
<text x="988.500" y="899" font-size="4.500" fill="#dde">STOP</text>
<path d="M1018 888 1026 904H1010Z" fill="#d4d6d8" stroke="#bbb"/><rect x="1017" y="893" width="2" height="6" fill="#777"/><rect x="1017" y="900" width="2" height="2" fill="#777"/>
<use href="#triU" x="1038" y="897" opacity=".5"/>
<path d="M1203 892 1207 888 1211 892ZM1203 900 1207 904 1211 900Z" fill="#d8dce0" stroke="#999"/>
<path d="M1218 889 1229 899 1224 900 1227 905 1224 906 1221 901 1218 904Z" fill="#111"/>
<path d="M1226 889Q1234 892 1231 903" fill="none" stroke="#7ac07a" stroke-width="1.500"/>
<path d="M1246 889 1256 899 1252 900 1255 905 1252 906 1249 901 1246 904Z" fill="#fff" stroke="#111"/>
<use href="#triU" x="1269" y="897"/>
<rect x="1280" y="890.500" width="13" height="12" fill="none" stroke="#333" stroke-width="1.500" stroke-dasharray="3 2"/>
<use href="#triU" x="1306" y="897"/>
<g transform="translate(1329 896)"><circle r="6" fill="#cdd3dc" stroke="#556"/><path d="M-8 6C-3 5 4-2 7-7" stroke="#3a4a70" stroke-width="1.400" fill="none"/></g>
<use href="#triU" x="1348" y="897"/>
<use href="#hand" x="1367" y="896"/>
<g transform="translate(1389 895)"><circle r="6" fill="#dfe9f4" stroke="#444" stroke-width="1.300"/><path d="M4 4 8 9" stroke="#8a7a30" stroke-width="2.500"/></g>
<use href="#triU" x="1408" y="897"/>
<path d="M1421 902 1424 896 1426 899 1435 892M1421 902 1428 900 1426 898" fill="none" stroke="#2a4a90" stroke-width="1.300"/>
<path d="M1446 902 1449 896 1451 899 1460 892M1446 902 1453 900 1451 898" fill="none" stroke="#b0b4b8" stroke-width="1.300"/>
<g fill="#c4c8cc"><rect x="1478" y="898" width="2" height="2"/><rect x="1474" y="902" width="2" height="2"/><rect x="1478" y="902" width="2" height="2"/><rect x="1470" y="906" width="2" height="2"/><rect x="1474" y="906" width="2" height="2"/><rect x="1478" y="906" width="2" height="2"/></g>
</svg>
</body></html>
